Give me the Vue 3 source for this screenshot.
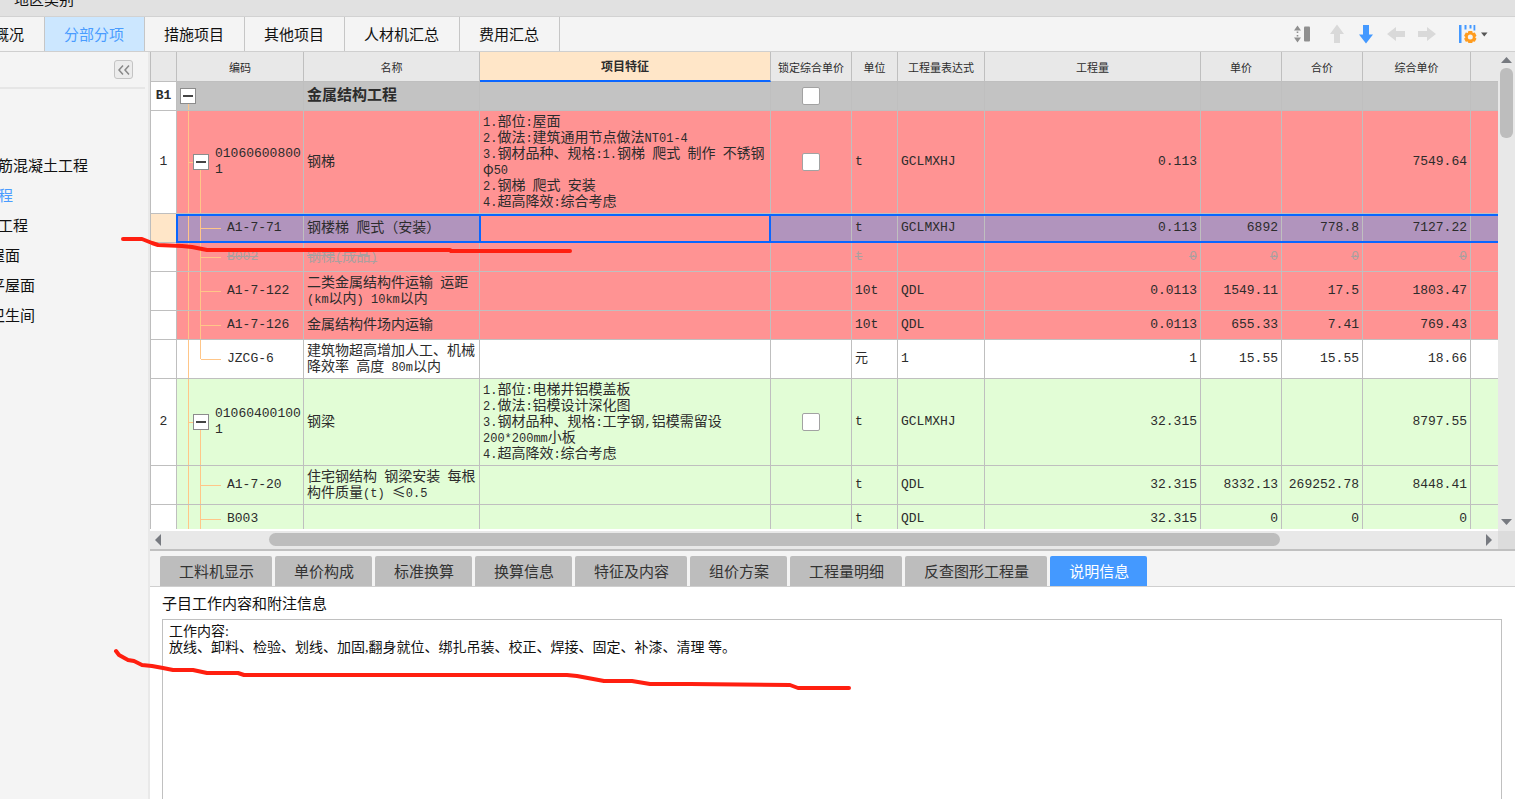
<script setup>
import { ref } from 'vue'

const pageTabs = ['概况', '分部分项', '措施项目', '其他项目', '人材机汇总', '费用汇总']
const activePage = ref('分部分项')

const sections = [
  { label: '筋混凝土工程', end: 88 },
  { label: '程', end: 13, active: true },
  { label: '工程', end: 28 },
  { label: '屋面', end: 20 },
  { label: '平屋面', end: 35 },
  { label: '卫生间', end: 35 },
]

const columns = [
  { key: 'no', label: '' },
  { key: 'code', label: '编码' },
  { key: 'name', label: '名称' },
  { key: 'feature', label: '项目特征' },
  { key: 'lock', label: '锁定综合单价' },
  { key: 'unit', label: '单位' },
  { key: 'expr', label: '工程量表达式' },
  { key: 'qty', label: '工程量' },
  { key: 'price', label: '单价' },
  { key: 'total', label: '合价' },
  { key: 'rate', label: '综合单价' },
  { key: 'rest', label: '' },
]

const rows = [
  { no: 'B1', kind: 'root', tone: 'grey', code: [], name: ['金属结构工程'], lock: true },
  {
    no: '1', kind: 'parent', tone: 'red', code: ['01060600800', '1'], name: ['钢梯'], lock: true,
    feature: ['1.部位:屋面', '2.做法:建筑通用节点做法NT01-4', '3.钢材品种、规格:1.钢梯 爬式 制作 不锈钢', 'φ50', '2.钢梯 爬式 安装', '4.超高降效:综合考虑'],
    unit: 't', expr: 'GCLMXHJ', qty: '0.113', rate: '7549.64',
  },
  { kind: 'leaf', tone: 'red', selected: true, code: ['A1-7-71'], name: ['钢楼梯 爬式（安装）'], unit: 't', expr: 'GCLMXHJ', qty: '0.113', price: '6892', total: '778.8', rate: '7127.22' },
  { kind: 'leaf', tone: 'red', struck: true, code: ['B002'], name: ['钢梯(成品)'], unit: 't', qty: '0', price: '0', total: '0', rate: '0' },
  { kind: 'leaf', tone: 'red', code: ['A1-7-122'], name: ['二类金属结构件运输 运距', '(km以内) 10km以内'], unit: '10t', expr: 'QDL', qty: '0.0113', price: '1549.11', total: '17.5', rate: '1803.47' },
  { kind: 'leaf', tone: 'red', code: ['A1-7-126'], name: ['金属结构件场内运输'], unit: '10t', expr: 'QDL', qty: '0.0113', price: '655.33', total: '7.41', rate: '769.43' },
  { kind: 'last', tone: 'white', code: ['JZCG-6'], name: ['建筑物超高增加人工、机械', '降效率 高度 80m以内'], unit: '元', expr: '1', qty: '1', price: '15.55', total: '15.55', rate: '18.66' },
  {
    no: '2', kind: 'parent', tone: 'green', code: ['01060400100', '1'], name: ['钢梁'], lock: true,
    feature: ['1.部位:电梯井铝模盖板', '2.做法:铝模设计深化图', '3.钢材品种、规格:工字钢,铝模需留设', '200*200mm小板', '4.超高降效:综合考虑'],
    unit: 't', expr: 'GCLMXHJ', qty: '32.315', rate: '8797.55',
  },
  { kind: 'leaf', tone: 'green', code: ['A1-7-20'], name: ['住宅钢结构 钢梁安装 每根', '构件质量(t) ≤0.5'], unit: 't', expr: 'QDL', qty: '32.315', price: '8332.13', total: '269252.78', rate: '8448.41' },
  { kind: 'leaf', tone: 'green', code: ['B003'], name: [], unit: 't', expr: 'QDL', qty: '32.315', price: '0', total: '0', rate: '0' },
]

const numeric = ['qty', 'price', 'total', 'rate']

const detailTabs = ['工料机显示', '单价构成', '标准换算', '换算信息', '特征及内容', '组价方案', '工程量明细', '反查图形工程量', '说明信息']
const activeDetail = ref('说明信息')

const note = ref('工作内容:\n放线、卸料、检验、划线、加固,翻身就位、绑扎吊装、校正、焊接、固定、补漆、清理 等。')

// Splits a line into Latin and Chinese runs so each gets its own face.
function runs(line) {
  return line
    .split(/([\x20-\x7e]+)/)
    .filter(Boolean)
    .map((text) => ({ text, latin: /^[\x20-\x7e]+$/.test(text) }))
}
</script>

<template>
  <div class="app">
    <div class="topbar"><span>地区类别</span></div>

    <header class="tabbar">
      <nav class="page-tabs">
        <button
          v-for="tab in pageTabs"
          :key="tab"
          type="button"
          :class="['page-tab', { active: tab === activePage, first: tab === '概况' }]"
          @click="activePage = tab"
        >{{ tab }}</button>
      </nav>
      <div class="tools">
        <button type="button" class="tool row-height" aria-label="行高">
          <svg width="18" height="18" viewBox="0 0 18 18"><path d="M4.500 0.500l3.500 5H1zM4.500 17.500l3.500-5H1zM3.700 6.500h1.600v1.500h-1.600zM3.700 10h1.600v1.500h-1.600z" fill="#8f8f8f" /><rect x="11" y="1.500" width="6" height="15" rx="1" fill="#8f8f8f" /></svg>
        </button>
        <button type="button" class="tool" aria-label="上移">
          <svg width="18" height="20" viewBox="0 0 18 20"><path d="M9 0.500l7 9.500h-4v9H6v-9H2z" fill="#d9d9d9" /></svg>
        </button>
        <button type="button" class="tool" aria-label="下移">
          <svg width="18" height="20" viewBox="0 0 18 20"><path d="M9 19.500L2 10.500h4V1h6v9.500h4z" fill="#4499ff" /></svg>
        </button>
        <button type="button" class="tool" aria-label="左移">
          <svg width="20" height="16" viewBox="0 0 20 16"><path d="M1 8l9-7v4h9v6h-9v4z" fill="#d9d9d9" /></svg>
        </button>
        <button type="button" class="tool" aria-label="右移">
          <svg width="20" height="16" viewBox="0 0 20 16"><path d="M19 8l-9-7v4H1v6h9v4z" fill="#d9d9d9" /></svg>
        </button>
        <button type="button" class="tool setting" aria-label="设置">
          <svg width="30" height="20" viewBox="0 0 30 20">
            <path d="M1 1h2.500v18H1zM6.500 1h2v4.500h-2zM11.500 1h2v3.500h-2zM15.500 1h1.800v5.500h-1.800z" fill="#4499ff" />
            <path d="M10.400 7h3.800l.6 1.900 2-.4 1.700 3.200-1.400 1.500 1.400 1.600-1.700 3-2-.4-.6 1.600h-3.800l-.6-1.600-2 .4-1.700-3 1.400-1.600-1.400-1.500 1.700-3.200 2 .4zM12.300 10.600a2.500 2.500 0 1 0 0 5 2.500 2.500 0 0 0 0-5z" fill="#ff9c1f" fill-rule="evenodd" />
            <path d="M23 8.500h6.500l-3.200 4z" fill="#555" />
          </svg>
        </button>
      </div>
    </header>

    <div class="body">
      <aside class="sidebar">
        <div class="side-head">
          <button type="button" class="collapse" aria-label="收起">
            <svg width="14" height="12" viewBox="0 0 14 12"><path d="M6 1.500L2 6l4 4.500M12 1.500L8 6l4 4.500" fill="none" stroke="#888" stroke-width="1.500" /></svg>
          </button>
        </div>
        <ul class="sections">
          <li v-for="item in sections" :key="item.label" :class="{ active: item.active }" :style="{ width: item.end + 'px' }">{{ item.label }}</li>
        </ul>
      </aside>

      <main class="main">
        <section class="upper">
          <div class="grid-row">
            <div class="viewport">
              <table>
                <colgroup>
                  <col v-for="col in columns" :key="col.key" :class="'w-' + col.key" />
                </colgroup>
                <thead>
                  <tr>
                    <th v-for="col in columns" :key="col.key" :class="{ current: col.key === 'feature' }">{{ col.label }}</th>
                  </tr>
                </thead>
                <tbody>
                  <tr v-for="(row, i) in rows" :key="i" :class="[row.tone, { selected: row.selected, struck: row.struck, root: row.kind === 'root' }]">
                    <td v-for="col in columns" :key="col.key" :class="[col.key, col.key === 'code' ? row.kind : '', { num: numeric.includes(col.key) }]">
                      <div v-if="col.key === 'code'" class="code-box">
                        <button v-if="row.kind === 'root' || row.kind === 'parent'" type="button" class="toggle" aria-label="折叠">
                          <svg width="10" height="2" viewBox="0 0 10 2"><rect width="10" height="2" fill="#444" /></svg>
                        </button>
                        <div>
                          <div v-for="line in row.code" :key="line">{{ line }}</div>
                        </div>
                      </div>
                      <template v-else-if="col.key === 'name' || col.key === 'feature'">
                        <div v-for="line in row[col.key]" :key="line" class="line">
                          <span v-for="(run, r) in runs(line)" :key="r" :class="{ latin: run.latin }">{{ run.text }}</span>
                        </div>
                      </template>
                      <input v-else-if="col.key === 'lock' && row.lock" type="checkbox" aria-label="锁定综合单价" />
                      <template v-else-if="col.key !== 'lock'">{{ row[col.key] }}</template>
                    </td>
                  </tr>
                </tbody>
              </table>
            </div>
            <div class="vscroll">
              <svg width="11" height="6" viewBox="0 0 11 6"><path d="M0 6l5.500-6L11 6z" fill="#777a80" /></svg>
              <div class="vthumb"></div>
              <svg width="11" height="6" viewBox="0 0 11 6"><path d="M0 0l5.500 6L11 0z" fill="#777a80" /></svg>
            </div>
          </div>
          <div class="hrow">
            <div class="hscroll">
              <svg width="6" height="12" viewBox="0 0 6 12"><path d="M6 0L0 6l6 6z" fill="#777a80" /></svg>
              <div class="track"><div class="hthumb"></div></div>
              <svg width="6" height="12" viewBox="0 0 6 12"><path d="M0 0l6 6-6 6z" fill="#777a80" /></svg>
            </div>
            <div class="corner"></div>
          </div>
        </section>

        <section class="lower">
          <nav class="detail-tabs">
            <button
              v-for="tab in detailTabs"
              :key="tab"
              type="button"
              :class="['detail-tab', { active: tab === activeDetail }]"
              @click="activeDetail = tab"
            >{{ tab }}</button>
          </nav>
          <label class="note-label" for="note">子目工作内容和附注信息</label>
          <textarea id="note" v-model="note" class="note" spellcheck="false"></textarea>
        </section>
      </main>
    </div>

    <svg class="marks" width="1000" height="700" viewBox="0 0 1000 700">
      <polyline points="123,239 142,239 152,243 158,245 182,246 192,247 207,250 450,250 451,251 570,251" />
      <polyline points="116,651 119,655 128,660 134,661 142,665 152,666 163,668 173,670 193,670 207,673 238,673 244,675 567,675 577,676 604,681 632,681 650,684 690,684 790,685 798,688 849,688" />
    </svg>
  </div>
</template>

<style>
body {
  margin: 0;
  overflow: hidden;
}
</style>

<style scoped>
.app {
  position: relative;
  display: flex;
  flex-direction: column;
  height: 100vh;
  overflow: hidden;
  background: #f4f4f4;
  color: #111;
  font: 15px/20px "Noto Sans CJK SC", sans-serif;
}
button {
  margin: 0;
  padding: 0;
  border: 0;
  background: none;
  color: inherit;
  font: inherit;
  white-space: nowrap;
}
svg {
  display: block;
}

.topbar {
  display: flex;
  flex: none;
  align-items: flex-end;
  box-sizing: border-box;
  height: 17px;
  padding: 0 14px 7px;
  border-bottom: 1px solid #d2d2d2;
  background: #e1e1e1;
  overflow: hidden;
}
.tabbar {
  display: flex;
  flex: none;
  justify-content: space-between;
  box-sizing: border-box;
  height: 35px;
  border-bottom: 1px solid #cfcfcf;
}
.page-tabs {
  display: flex;
}
.page-tab {
  padding: 0 20px 0 19px;
  border-right: 1px solid #c6c6c6;
}
.page-tab.first {
  display: flex;
  align-items: center;
  justify-content: flex-end;
  width: 45px;
  overflow: hidden;
}
.page-tab.active {
  background: #cce7ff;
  color: #4a9cff;
}
.tools {
  display: flex;
  align-items: center;
  gap: 11px;
  padding-right: 27px;
}
.row-height {
  margin-right: 6px;
}
.setting {
  margin-left: 10px;
}

.body {
  display: flex;
  flex: 1;
  min-height: 0;
}
.sidebar {
  flex: none;
  box-sizing: border-box;
  width: 150px;
  border-right: 2px solid #e9e9e9;
}
.side-head {
  display: flex;
  justify-content: flex-end;
  margin-right: 3px;
  padding: 8px 12px 8px 0;
  border-bottom: 2px solid #e6e6e6;
}
.collapse {
  display: flex;
  align-items: center;
  justify-content: center;
  box-sizing: border-box;
  width: 19px;
  height: 19px;
  border: 1px solid #c4c4c4;
  border-radius: 3px;
  background: #ececec;
}
.sections {
  margin: 0;
  padding: 61px 0 0;
  list-style: none;
}
.sections li {
  display: flex;
  justify-content: flex-end;
  line-height: 30px;
  white-space: nowrap;
}
.sections .active {
  color: #4a9cff;
}

.main {
  display: flex;
  flex: 1;
  flex-direction: column;
  min-width: 0;
  background: #fff;
}
.upper {
  display: flex;
  flex: 2 1 0;
  flex-direction: column;
  box-sizing: border-box;
  min-height: 0;
  border-bottom: 2px solid #c0c0c0;
}
.grid-row {
  display: flex;
  flex: 1;
  min-height: 0;
}
.viewport {
  flex: 1;
  min-width: 0;
  margin-bottom: 2px;
  border-left: 1px solid #bdbdbd;
  overflow: hidden;
}
table {
  width: 100%;
  table-layout: fixed;
  border-collapse: separate;
  border-spacing: 0;
  color: #2c2c2c;
  font: 13px/16px "Liberation Mono", "Noto Sans CJK SC", monospace;
}
.w-no { width: 26px; }
.w-code { width: 127px; }
.w-name { width: 176px; }
.w-feature { width: 291px; }
.w-lock { width: 81px; }
.w-unit { width: 46px; }
.w-expr { width: 87px; }
.w-price { width: 81px; }
.w-total { width: 81px; }
.w-rate { width: 108px; }
.w-rest { width: 27px; }
th {
  box-sizing: border-box;
  height: 30px;
  padding: 0;
  border-right: 1px solid #bfbfbf;
  border-bottom: 1px solid #bfbfbf;
  background: #e8e8e8;
  font: 11px/16px "Noto Sans CJK SC", sans-serif;
}
th.current {
  border-bottom: 2px solid #0a66ff;
  background: #ffe6c8;
  font-size: 12px;
  font-weight: 700;
}
td {
  box-sizing: border-box;
  height: 29px;
  padding: 3px;
  border-right: 1px solid #bfbfbf;
  border-bottom: 1px solid #bfbfbf;
  white-space: pre;
}
th:last-child,
td:last-child {
  border-right: 0;
}
tr.grey td { background-color: #c3c3c3; }
tr.red td { background-color: #ff9393; }
tr.green td { background-color: #e2fdd6; }
tr.root td {
  font-weight: 700;
}
tr.root .line {
  font-size: 15px;
}
tbody tr td.no {
  padding: 0;
  background-color: #fff;
  text-align: center;
}
.num {
  text-align: right;
}
.lock {
  padding: 0;
  text-align: center;
}
.name,
.feature {
  padding: 1px 3px 5px;
}
.line {
  font-size: 14px;
  font-family: "Noto Sans CJK SC", sans-serif;
}
.latin {
  font: 12px/8px "Liberation Mono", monospace;
}

/* Tree guides are painted behind the code column. */
td.code {
  --guide: linear-gradient(#ffc688, #ffc688);
  padding: 0;
  background-repeat: no-repeat;
}
.code.root {
  background-image: var(--guide);
  background-position: 11px 100%;
  background-size: 1px 50%;
}
.code.parent {
  background-image: var(--guide), var(--guide), var(--guide);
  background-position: 11px 0, 12px 50%, 23px 100%;
  background-size: 1px 100%, 6px 1px, 1px 50%;
}
.code.leaf {
  background-image: var(--guide), var(--guide), var(--guide);
  background-position: 11px 0, 24px 50%, 23px 0;
  background-size: 1px 100%, 20px 1px, 1px 100%;
}
.code.last {
  background-image: var(--guide), var(--guide), var(--guide);
  background-position: 11px 0, 24px 50%, 23px 0;
  background-size: 1px 100%, 20px 1px, 1px 50%;
}
.code-box {
  display: flex;
  align-items: center;
  gap: 6px;
}
.root .code-box { padding-left: 3px; }
.parent .code-box { padding-left: 16px; }
.leaf .code-box,
.last .code-box { padding-left: 50px; }
.toggle {
  display: flex;
  flex: none;
  align-items: center;
  justify-content: center;
  box-sizing: border-box;
  width: 16px;
  height: 16px;
  border: 1px solid #8c8c8c;
  background: #fff;
}
input[type="checkbox"] {
  display: block;
  box-sizing: border-box;
  width: 18px;
  height: 18px;
  margin: 0 auto;
  border: 1px solid #a2a2a2;
  border-radius: 2px;
  background: #fff;
  appearance: none;
}

.struck td {
  color: #a9a0a0;
  text-decoration: line-through;
}
tr.selected td {
  position: relative;
  background-color: #b194bd;
}
tr.selected td.no { background-color: #ffe6c8; }
tr.selected td.feature { background-color: #ff9393; }
/* Selection frame drawn over the cell grid lines. */
tr.selected td:not(.no)::after {
  position: absolute;
  inset: 0 -1px -1px 0;
  border: solid #0a66ff;
  border-width: 2px 0;
  content: "";
}
tr.selected td.code::after {
  left: -1px;
  border-left-width: 2px;
}
tr.selected td.feature::after {
  left: -1px;
  border-width: 2px;
}

.vscroll {
  display: flex;
  flex: none;
  flex-direction: column;
  align-items: center;
  box-sizing: border-box;
  width: 17px;
  padding: 5px 0 6px;
  background: #e8e8e8;
}
.vthumb {
  width: 13px;
  height: 70px;
  margin: 5px 0 auto;
  border-radius: 6px;
  background: #bdbdbd;
}
.hrow {
  display: flex;
  flex: none;
  height: 18px;
}
.hscroll {
  display: flex;
  flex: 1;
  align-items: center;
  gap: 6px;
  padding: 0 6px 0 5px;
  background: #e8e8e8;
}
.track {
  flex: 1;
}
.hthumb {
  width: 77%;
  height: 13px;
  margin-left: 102px;
  border-radius: 7px;
  background: #bdbdbd;
}
.corner {
  width: 17px;
  background: #dcdcdc;
}

.lower {
  display: flex;
  flex: 1 1 0;
  flex-direction: column;
  min-height: 0;
}
.detail-tabs {
  display: flex;
  flex: none;
  gap: 3px;
  padding: 5px 10px 0;
  border-bottom: 1px solid #cfcfcf;
  background: #f4f4f4;
}
.detail-tab {
  height: 30px;
  padding: 0 18px 0 19px;
  border-radius: 2px 2px 0 0;
  background: #bdbdbd;
  color: #333;
}
.detail-tab.active {
  background: #4499ff;
  color: #fff;
}
.note-label {
  flex: none;
  padding: 6px 12px 6px;
}
.note {
  flex: 1;
  box-sizing: border-box;
  margin: 0 13px 0 12px;
  padding: 4px 6px;
  border: 1px solid #c0c0c0;
  border-bottom: 0;
  border-radius: 0;
  outline: 0;
  background: #fff;
  color: #111;
  font: 14px/16px "Liberation Serif", "Noto Sans CJK SC", serif;
  resize: none;
}

.marks {
  position: absolute;
  top: 0;
  left: 0;
  pointer-events: none;
}
.marks polyline {
  fill: none;
  stroke: #ff1f10;
  stroke-width: 4;
  stroke-linejoin: round;
  stroke-linecap: round;
}
</style>
